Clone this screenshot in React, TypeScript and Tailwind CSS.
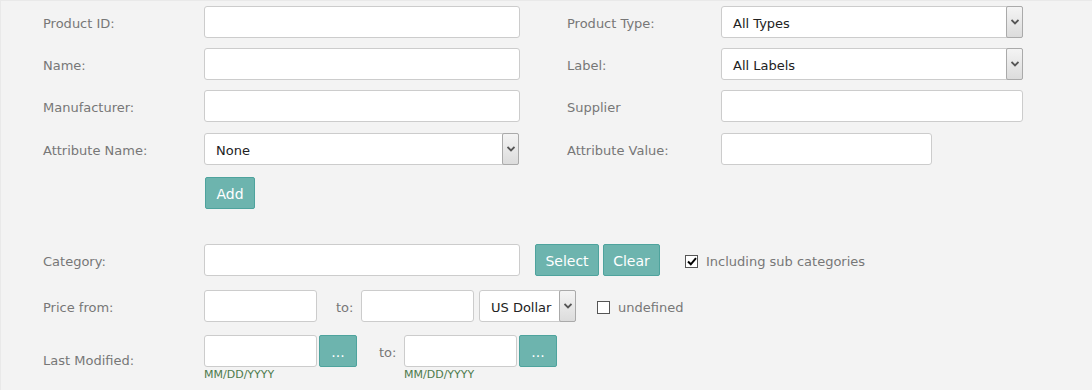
import React from "react";

const font = { fontFamily: '"DejaVu Sans", Verdana, sans-serif' };

function Label({ children, w = "w-[161px]" }: { children: React.ReactNode; w?: string }) {
  return <div className={`${w} shrink-0 pt-[4px] text-[13px] text-[#777]`}>{children}</div>;
}

function Input({ w }: { w: string }) {
  return <div className={`${w} h-[32px] shrink-0 rounded-[3px] border border-[#ccc] bg-white`} />;
}

function Chevron() {
  return (
    <svg width="8" height="6" viewBox="0 0 8 6">
      <path d="M0.5 1 L4 4.5 L7.5 1" stroke="#555" strokeWidth="1.8" fill="none" />
    </svg>
  );
}

function Select({ w, text }: { w: string; text: string }) {
  return (
    <div className={`${w} h-[32px] shrink-0 rounded-[3px] border border-[#ccc] bg-white flex items-stretch`}>
      <div className="flex-1 flex items-center pl-[11px] pt-[3px] text-[13px] text-[#222]">{text}</div>
      <div className="w-[17px] m-[-1px] flex items-center justify-center rounded-[2px] border border-[#aaa] bg-gradient-to-b from-[#f4f4f4] to-[#dcdcdc]">
        <Chevron />
      </div>
    </div>
  );
}

function Btn({ children, w }: { children: React.ReactNode; w: string }) {
  return (
    <div className={`${w} h-[32px] shrink-0 rounded-[2px] border border-[#4ea39d] bg-[#6db4ae] flex items-center justify-center pt-[2px] text-[14px] text-white`}>
      {children}
    </div>
  );
}

function Checkbox({ checked }: { checked?: boolean }) {
  return (
    <div className="w-[13px] h-[13px] mt-[3px] shrink-0 border border-[#555] bg-white flex items-center justify-center">
      {checked && (
        <svg width="10" height="9" viewBox="0 0 10 9">
          <path d="M1 4.5 L3.8 7.3 L9 1.2" stroke="#000" strokeWidth="2" fill="none" />
        </svg>
      )}
    </div>
  );
}

export default function App() {
  return (
    <div style={font} className="w-[1092px] h-[390px] bg-[#f3f3f3] border-t border-l border-[#e9e9e9] overflow-hidden">
      <div className="pl-[42px] pt-[5px] flex flex-col">
        <div className="flex items-center h-[32px]">
          <Label>Product ID:</Label>
          <Input w="w-[316px]" />
          <div className="w-[47px]" />
          <Label w="w-[154px]">Product Type:</Label>
          <Select w="w-[302px]" text="All Types" />
        </div>
        <div className="flex items-center h-[32px] mt-[10px]">
          <Label>Name:</Label>
          <Input w="w-[316px]" />
          <div className="w-[47px]" />
          <Label w="w-[154px]">Label:</Label>
          <Select w="w-[302px]" text="All Labels" />
        </div>
        <div className="flex items-center h-[32px] mt-[10px]">
          <Label>Manufacturer:</Label>
          <Input w="w-[316px]" />
          <div className="w-[47px]" />
          <Label w="w-[154px]">Supplier</Label>
          <Input w="w-[302px]" />
        </div>
        <div className="flex items-center h-[32px] mt-[11px]">
          <Label>Attribute Name:</Label>
          <Select w="w-[315px]" text="None" />
          <div className="w-[48px]" />
          <Label w="w-[154px]">Attribute Value:</Label>
          <Input w="w-[211px]" />
        </div>
        <div className="flex mt-[12px] pl-[162px]">
          <Btn w="w-[50px]">Add</Btn>
        </div>
        <div className="flex items-center h-[32px] mt-[35px]">
          <Label>Category:</Label>
          <Input w="w-[316px]" />
          <div className="w-[15px]" />
          <Btn w="w-[64px]">Select</Btn>
          <div className="w-[4px]" />
          <Btn w="w-[57px]">Clear</Btn>
          <div className="w-[25px]" />
          <Checkbox checked />
          <span className="ml-[8px] pt-[4px] text-[13px] text-[#777]">Including sub categories</span>
        </div>
        <div className="flex items-center h-[32px] mt-[14px]">
          <Label>Price from:</Label>
          <Input w="w-[113px]" />
          <span className="ml-[19px] w-[25px] pt-[4px] text-[13px] text-[#777]">to:</span>
          <Input w="w-[113px]" />
          <div className="w-[5px]" />
          <Select w="w-[97px]" text="US Dollar" />
          <div className="w-[21px]" />
          <Checkbox />
          <span className="ml-[8px] pt-[4px] text-[13px] text-[#777]">undefined</span>
        </div>
        <div className="flex items-start mt-[13px]">
          <div className="h-[32px] flex items-center pt-[16px]">
            <Label>Last Modified:</Label>
          </div>
          <div className="flex flex-col">
            <div className="flex items-center">
              <Input w="w-[113px]" />
              <div className="w-[2px]" />
              <Btn w="w-[38px]">...</Btn>
            </div>
            <div className="text-[11px] leading-[12px] mt-[2px] text-[#4c7a4c]">MM/DD/YYYY</div>
          </div>
          <div className="h-[32px] flex items-center">
            <span className="ml-[22px] w-[25px] pt-[4px] text-[13px] text-[#777]">to:</span>
          </div>
          <div className="flex flex-col">
            <div className="flex items-center">
              <Input w="w-[113px]" />
              <div className="w-[2px]" />
              <Btn w="w-[38px]">...</Btn>
            </div>
            <div className="text-[11px] leading-[12px] mt-[2px] text-[#4c7a4c]">MM/DD/YYYY</div>
          </div>
        </div>
      </div>
    </div>
  );
}
